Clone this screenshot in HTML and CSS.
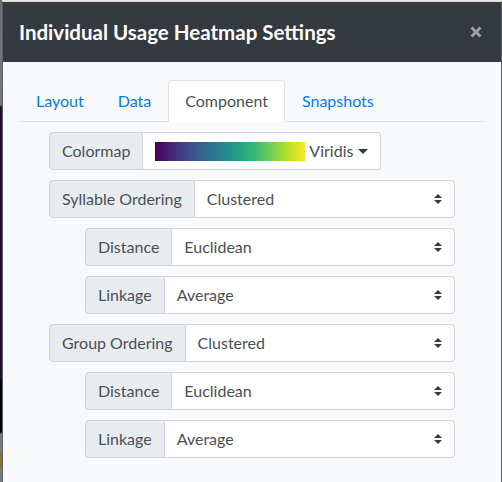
FILE: index.html
```html
<!DOCTYPE html>
<html lang="en">
<head>
<meta charset="utf-8">
<title>Individual Usage Heatmap Settings</title>
<link rel="stylesheet" href="styles.css">
</head>
<body>
<div class="backdrop-strip"></div>
<div class="modal">
  <div class="modal-header">
    <h5 class="modal-title">Individual Usage Heatmap Settings</h5>
    <button class="close" type="button" aria-label="Close">
      <svg width="12" height="12" viewBox="0 0 12 12"><path d="M1.5 1.5L10.5 10.5M10.5 1.5L1.5 10.5" stroke="currentColor" stroke-width="3"/></svg>
    </button>
  </div>
  <div class="modal-body">
    <ul class="nav-tabs">
      <li class="nav-link">Layout</li>
      <li class="nav-link">Data</li>
      <li class="nav-link active">Component</li>
      <li class="nav-link">Snapshots</li>
    </ul>
    <div class="tab-pane">
      <div class="input-group inline">
        <span class="input-group-text">Colormap</span>
        <div class="dropdown-btn">
          <span class="viridis"></span>
          <span class="dd-label">Viridis</span>
          <span class="caret"></span>
        </div>
      </div>
      <div class="input-group">
        <span class="input-group-text">Syllable Ordering</span>
        <div class="custom-select"><span>Clustered</span><svg class="sel-arrow" width="8" height="10" viewBox="0 0 4 5"><path d="M2 0L0 2h4zm0 5L0 3h4z" fill="#343a40"/></svg></div>
      </div>
      <div class="input-group nested">
        <span class="input-group-text">Distance</span>
        <div class="custom-select"><span>Euclidean</span><svg class="sel-arrow" width="8" height="10" viewBox="0 0 4 5"><path d="M2 0L0 2h4zm0 5L0 3h4z" fill="#343a40"/></svg></div>
      </div>
      <div class="input-group nested">
        <span class="input-group-text">Linkage</span>
        <div class="custom-select"><span>Average</span><svg class="sel-arrow" width="8" height="10" viewBox="0 0 4 5"><path d="M2 0L0 2h4zm0 5L0 3h4z" fill="#343a40"/></svg></div>
      </div>
      <div class="input-group">
        <span class="input-group-text">Group Ordering</span>
        <div class="custom-select"><span>Clustered</span><svg class="sel-arrow" width="8" height="10" viewBox="0 0 4 5"><path d="M2 0L0 2h4zm0 5L0 3h4z" fill="#343a40"/></svg></div>
      </div>
      <div class="input-group nested">
        <span class="input-group-text">Distance</span>
        <div class="custom-select"><span>Euclidean</span><svg class="sel-arrow" width="8" height="10" viewBox="0 0 4 5"><path d="M2 0L0 2h4zm0 5L0 3h4z" fill="#343a40"/></svg></div>
      </div>
      <div class="input-group nested">
        <span class="input-group-text">Linkage</span>
        <div class="custom-select"><span>Average</span><svg class="sel-arrow" width="8" height="10" viewBox="0 0 4 5"><path d="M2 0L0 2h4zm0 5L0 3h4z" fill="#343a40"/></svg></div>
      </div>
    </div>
  </div>
</div>
</body>
</html>
```
FILE: styles.css
```css
* { box-sizing: border-box; }
html, body { height: 100%; }
body {
  margin: 0;
  display: flex;
  align-items: stretch;
  background: #e6e6e6;
  font-family: Lato, "Liberation Sans", sans-serif;
  font-size: 16px;
  line-height: 1.5;
  color: #212529;
  overflow: hidden;
}
.backdrop-strip {
  width: 2px;
  flex: none;
  background: linear-gradient(to bottom,
    #6e6e6e 0, #7a7a7a 105px,
    #2a0a3a 107px, #2a0a3a 378px,
    #050505 380px, #050505 432px,
    #7b7b7b 434px, #7b7b7b 452px,
    #8a7420 454px, #8a7420 466px,
    #7b7b7b 468px);
}
.modal {
  width: 500px;
  flex: none;
  margin-top: 1px;
  border: 1px solid #5a5d61;
  border-top-color: #ddd;
  border-bottom: 0;
  background: #f8f9fa;
  overflow: hidden;
}
.modal-header {
  display: flex;
  align-items: center;
  justify-content: space-between;
  background: #343a40;
  padding: 15px 16px;
  height: 60px;
}
.modal-title {
  margin: 0;
  color: #fff;
  font-size: 20.5px;
  font-weight: 700;
  line-height: 30px;
}
.close {
  display: flex;
  background: none;
  border: 0;
  padding: 0;
  margin-right: 3px;
  color: #9b9ea2;
}
.modal-body {
  padding: 18px 16px 16px;
}
.nav-tabs {
  display: flex;
  list-style: none;
  margin: 0;
  padding: 0;
  border-bottom: 1px solid #dee2e6;
}
.nav-link {
  padding: 8px 16px;
  margin-bottom: -1px;
  border: 1px solid transparent;
  border-radius: 4px 4px 0 0;
  color: #007bff;
  line-height: 24px;
}
.nav-link.active {
  color: #495057;
  background: #fff;
  border-color: #dee2e6 #dee2e6 #fff;
}
.tab-pane {
  display: flex;
  flex-direction: column;
  align-items: stretch;
  gap: 10px;
  padding: 10px 30px 0;
}
.input-group {
  display: flex;
  height: 38px;
  color: #495057;
}
.input-group.inline { align-self: flex-start; }
.input-group.nested { margin-left: 36px; }
.input-group-text {
  display: flex;
  align-items: center;
  padding: 6px 12px;
  background: #e9ecef;
  border: 1px solid #ced4da;
  border-radius: 4px 0 0 4px;
  white-space: nowrap;
}
.custom-select,
.dropdown-btn {
  display: flex;
  align-items: center;
  background: #fff;
  border: 1px solid #ced4da;
  border-left: 0;
  border-radius: 0 4px 4px 0;
}
.custom-select {
  flex: 1;
  justify-content: space-between;
  padding: 6px 12px;
}
.sel-arrow { flex: none; }
.dropdown-btn {
  padding: 6px 12px;
  gap: 4px;
}
.viridis {
  width: 150px;
  height: 19px;
  background: linear-gradient(to right,
    #440154 0%, #482878 11%, #3e4989 22%, #31688e 33%, #26828e 44%,
    #1f9e89 55%, #35b779 66%, #6ece58 77%, #b5de2b 88%, #fde725 100%);
}
.caret {
  width: 0;
  height: 0;
  margin-left: 1px;
  border-top: 5px solid #343a40;
  border-left: 5px solid transparent;
  border-right: 5px solid transparent;
}
```
